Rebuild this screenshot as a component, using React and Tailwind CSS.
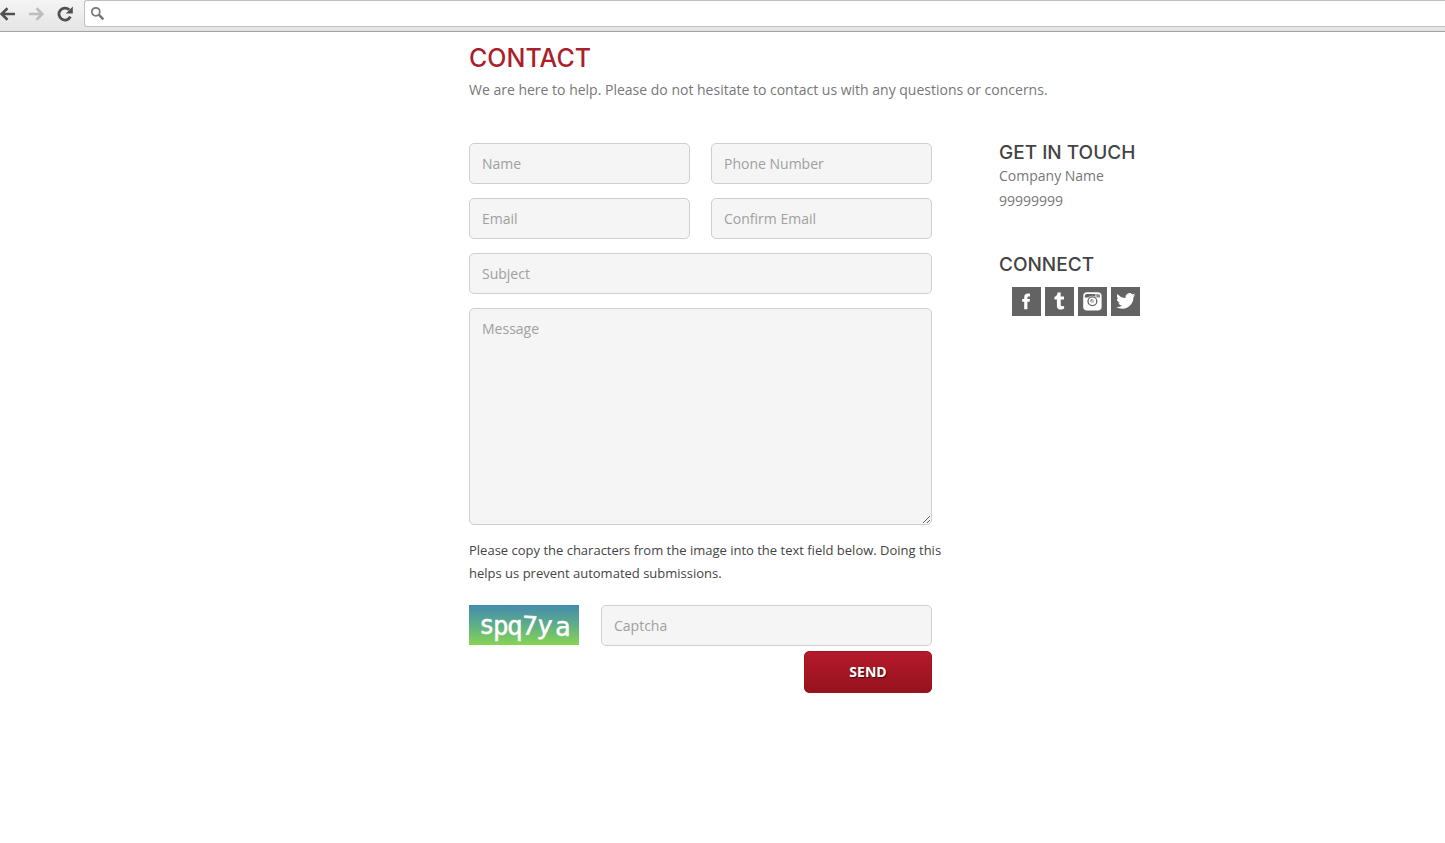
import React from "react";

const fieldClass =
  "block w-full rounded-[5px] border border-[#cfcfcf] bg-[#f5f5f5] px-3 text-sm text-[#555555] placeholder:text-[#a0a0a0] outline-none focus:border-[#999999]";

function Field({ label, name, type = "text" }) {
  return (
    <input
      type={type}
      name={name}
      aria-label={label}
      placeholder={label}
      className={`${fieldClass} h-[41px]`}
    />
  );
}

function BrowserBar() {
  return (
    <header className="flex h-8 items-start border-b border-[#a3a3a3] bg-linear-to-b from-[#f5f5f5] to-[#e4e4e4]">
      <nav aria-label="Browser" className="flex h-[27px] w-[84px] shrink-0 items-center gap-3">
        <button type="button" aria-label="Back" className="h-4 w-4">
          <svg viewBox="0 0 16 16" className="h-4 w-4" fill="none" stroke="#505050" strokeWidth="2.6">
            <path d="M15 8H2M7.5 2.2L1.6 8L7.5 13.8" />
          </svg>
        </button>
        <button type="button" aria-label="Forward" className="h-4 w-4">
          <svg viewBox="0 0 16 16" className="h-4 w-4" fill="none" stroke="#bdbdbd" strokeWidth="2.6">
            <path d="M1 8H14M8.5 2.2L14.4 8L8.5 13.8" />
          </svg>
        </button>
        <button type="button" aria-label="Reload" className="h-4 w-[18px]">
          <svg viewBox="0 0 18 16" className="h-4 w-[18px]">
            <path d="M13.2 3.8A6 6 0 1 0 14.4 10.6" fill="none" stroke="#505050" strokeWidth="2.8" />
            <path d="M16.8 0.6V7.6H9.8Z" fill="#505050" />
          </svg>
        </button>
      </nav>
      <label className="flex h-[27px] flex-1 items-center gap-2 rounded-l-[3px] border border-r-0 border-[#c0c0c0] bg-white pl-[5px]">
        <svg viewBox="0 0 15 15" className="h-[15px] w-[15px]" fill="none" stroke="#777777">
          <circle cx="5.8" cy="5.8" r="4" strokeWidth="1.7" />
          <path d="M8.7 8.7L13.4 13.4" strokeWidth="2.5" />
        </svg>
        <input type="text" aria-label="Address" className="h-5 min-w-0 flex-1 bg-transparent text-sm outline-none" />
      </label>
    </header>
  );
}

function Captcha() {
  return (
    <svg
      viewBox="0 0 110 40"
      role="img"
      aria-label="Captcha characters"
      className="h-10 w-[110px] shrink-0"
      fontFamily="'DejaVu Sans Mono', monospace"
      fontSize="26"
      fill="#ffffff"
      stroke="#ffffff"
      strokeWidth="0.4"
    >
      <defs>
        <linearGradient id="captcha-sky" x1="0" y1="0" x2="0" y2="1">
          <stop offset="0" stopColor="#438bae" />
          <stop offset="0.5" stopColor="#5eae88" />
          <stop offset="1" stopColor="#87d453" />
        </linearGradient>
      </defs>
      <rect width="110" height="40" fill="url(#captcha-sky)" stroke="none" />
      <text x="10" y="29">s</text>
      <text x="24" y="30">p</text>
      <text x="38" y="30">q</text>
      <text x="53" y="30" transform="rotate(3 61 21)">7</text>
      <text x="68" y="29" transform="rotate(4 75 22)">y</text>
      <text x="86" y="31">a</text>
    </svg>
  );
}

function SocialLink({ label, children }) {
  return (
    <a href="#" aria-label={label} className="block h-[29px] w-[29px] bg-[#636363] hover:bg-[#4b4b4b]">
      <svg viewBox="0 0 29 29" className="h-[29px] w-[29px]" fill="#ffffff">
        {children}
      </svg>
    </a>
  );
}

export default function App() {
  return (
    <div className="bg-white font-['Open_Sans',sans-serif] text-[#777777]">
      <BrowserBar />
      <main className="px-6 pt-[10px] pb-12 xl:pr-0 xl:pl-[469px]">
        <h1 className="font-['Inter',sans-serif] text-[25px] leading-8 font-medium text-[#aa1f2b]">
          CONTACT
        </h1>
        <p className="mt-px text-sm leading-[29px]">
          We are here to help. Please do not hesitate to contact us with any questions or concerns.
        </p>

        <div className="mt-[39px] flex flex-wrap items-start gap-x-[46px] gap-y-10">
          <form className="w-full max-w-[484px]" onSubmit={(e) => e.preventDefault()}>
            <div className="grid grid-cols-2 gap-x-[21px] gap-y-[14px] pr-[21px]">
              <Field label="Name" name="name" />
              <Field label="Phone Number" name="phone" type="tel" />
              <Field label="Email" name="email" type="email" />
              <Field label="Confirm Email" name="confirmEmail" type="email" />
              <div className="col-span-2">
                <Field label="Subject" name="subject" />
              </div>
              <textarea
                name="message"
                aria-label="Message"
                placeholder="Message"
                className={`${fieldClass} col-span-2 h-[217px] resize py-[10px] leading-5`}
              />
            </div>
            <p className="mt-[14px] text-[13px] leading-[23px] text-[#444444]">
              Please copy the characters from the image into the text field below. Doing this helps us prevent
              automated submissions.
            </p>
            <div className="mt-5 flex items-start gap-[22px] pr-[21px]">
              <Captcha />
              <Field label="Captcha" name="captcha" />
            </div>
            <div className="mt-[5px] flex justify-end pr-[21px]">
              <button
                type="submit"
                className="h-[42px] w-32 rounded-[5px] border border-[#a01420] bg-linear-to-b from-[#b51a2b] to-[#96121d] text-sm font-bold text-white text-shadow-[1px_1px_1px_#4a0a10]"
              >
                SEND
              </button>
            </div>
          </form>

          <aside>
            <section>
              <h2 className="font-['Inter',sans-serif] text-[19px] leading-5 font-medium text-[#444444]">
                GET IN TOUCH
              </h2>
              <p className="text-sm leading-[25px]">Company Name</p>
              <p className="text-sm leading-[25px]">99999999</p>
            </section>
            <section className="mt-[42px]">
              <h2 className="font-['Inter',sans-serif] text-[19px] leading-5 font-medium text-[#444444]">
                CONNECT
              </h2>
              <div className="mt-3 flex gap-1 pl-[13px]">
                <SocialLink label="Facebook">
                  <path d="M12.2 22.2V14.8H10.2V12H12.2V10.3C12.2 7.6 13.6 6.5 15.9 6.5H18V9.4H16.6C15.7 9.4 15.4 9.8 15.4 10.6V12H18L17.6 14.8H15.4V22.2Z" />
                </SocialLink>
                <SocialLink label="Tumblr">
                  <path d="M12.6 5.5H15.7V9.5H19V12.5H15.7V17.6C15.7 19.3 16.9 19.8 19.1 18.8V21.8C15.6 23.4 11.9 22.6 11.9 18.7V12.5H9.4V10C11.5 9.3 12.4 7.8 12.6 5.5Z" />
                </SocialLink>
                <SocialLink label="Instagram">
                  <rect x="5.2" y="5.2" width="18.4" height="18.4" rx="3.8" />
                  <path d="M6.8 10.6V9.2Q6.8 7 9 7H17.4V10.6H18.6Q17 8.8 14.4 8.8Q11.8 8.8 10.2 10.6Z" fill="#636363" />
                  <path d="M18 7.2H21Q22 7.2 22 8.4V10.6H18.6Z" fill="#8a8a8a" />
                  <circle cx="14.4" cy="14.2" r="4.4" fill="#ffffff" stroke="#636363" strokeWidth="1.3" />
                  <circle cx="14.4" cy="14.2" r="2" fill="#c8c8c8" />
                  <path d="M12.8 14.2A1.7 1.7 0 0 1 14.4 12.4" fill="none" stroke="#636363" strokeWidth="1" />
                </SocialLink>
                <SocialLink label="Twitter">
                  <path
                    transform="translate(5.2 4.4) scale(0.8)"
                    d="M23.95 4.57a10 10 0 0 1-2.82.77 4.96 4.96 0 0 0 2.16-2.72c-.95.55-2 .96-3.13 1.18a4.92 4.92 0 0 0-8.38 4.48C7.69 8.1 4.07 6.13 1.64 3.16a4.82 4.82 0 0 0-.67 2.48c0 1.71.87 3.21 2.19 4.1a4.9 4.9 0 0 1-2.23-.62v.06a4.92 4.92 0 0 0 3.95 4.83 5 5 0 0 1-2.21.08 4.94 4.94 0 0 0 4.6 3.42A9.87 9.87 0 0 1 0 19.54a13.99 13.99 0 0 0 7.56 2.21c9.05 0 14-7.5 14-13.99 0-.21 0-.42-.02-.63a9.94 9.94 0 0 0 2.46-2.55z"
                  />
                </SocialLink>
              </div>
            </section>
          </aside>
        </div>
      </main>
    </div>
  );
}
